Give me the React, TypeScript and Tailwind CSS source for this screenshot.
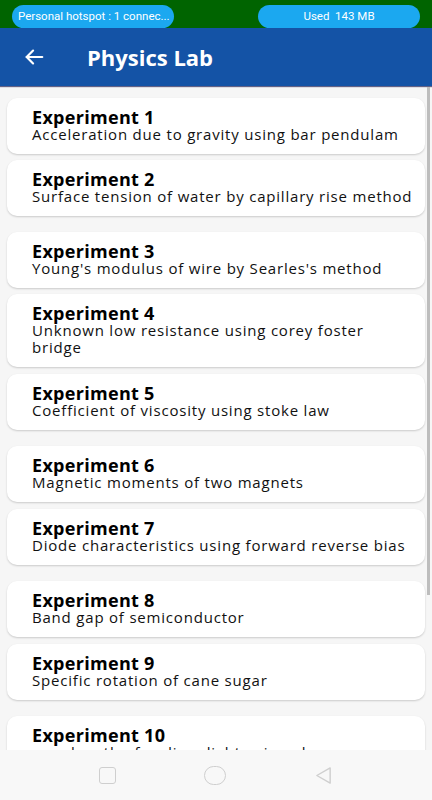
import React from 'react';

type Experiment = {
  title: string;
  desc: string;
  gapBefore: string;
  minH?: string;
};

const experiments: Experiment[] = [
  { title: 'Experiment 1', desc: 'Acceleration due to gravity using bar pendulam', gapBefore: 'mt-3' },
  { title: 'Experiment 2', desc: 'Surface tension of water by capillary rise method', gapBefore: 'mt-[6px]' },
  { title: 'Experiment 3', desc: "Young's modulus of wire by Searles's method", gapBefore: 'mt-4' },
  { title: 'Experiment 4', desc: 'Unknown low resistance using corey foster\nbridge', gapBefore: 'mt-[6px]', minH: 'min-h-[73px]' },
  { title: 'Experiment 5', desc: 'Coefficient of viscosity using stoke law', gapBefore: 'mt-[7px]' },
  { title: 'Experiment 6', desc: 'Magnetic moments of two magnets', gapBefore: 'mt-4' },
  { title: 'Experiment 7', desc: 'Diode characteristics using forward reverse bias', gapBefore: 'mt-[7px]' },
  { title: 'Experiment 8', desc: 'Band gap of semiconductor', gapBefore: 'mt-4' },
  { title: 'Experiment 9', desc: 'Specific rotation of cane sugar', gapBefore: 'mt-[7px]' },
  { title: 'Experiment 10', desc: 'wavelength of sodium light using plane', gapBefore: 'mt-4' }
];

function ExperimentCard({ item }: { item: Experiment }) {
  return (
    <div
      className={`${item.gapBefore} ${item.minH ?? 'min-h-[56px]'} mx-[7px] rounded-[10px] bg-white pl-[25px] pr-1 pt-[10px] pb-[6px] shadow-[0_1px_2px_rgba(0,0,0,0.18)]`}>
      <div className="text-[18px] leading-[18px] font-bold tracking-[0.3px] text-black">
        {item.title}
      </div>
      <div className="whitespace-pre-line text-[15px] leading-[17px] tracking-[0.8px] text-[#111]">
        {item.desc}
      </div>
    </div>);
}

export default function App() {
  return (
    <div
      className="relative flex h-[800px] w-[432px] flex-col overflow-hidden bg-[#f6f6f6]"
      style={{ fontFamily: '"Open Sans", Roboto, sans-serif' }}>

      <div className="flex h-[28px] items-end justify-between bg-[#006400] px-3">
        <div
          className="flex h-[23px] w-[162px] items-center whitespace-nowrap rounded-full bg-[#1ba8f0] pl-[6px] text-[11.5px] text-white"
          style={{ fontFamily: 'Roboto, sans-serif' }}>
          Personal hotspot : 1 connec...
        </div>
        <div
          className="flex h-[23px] w-[162px] items-center justify-center whitespace-nowrap rounded-full bg-[#1ba8f0] text-[11.5px] text-white"
          style={{ fontFamily: 'Roboto, sans-serif' }}>
          Used&nbsp; 143 MB
        </div>
      </div>

      <div className="flex h-[58px] items-center bg-[#1453a6] shadow-[0_1px_1px_rgba(0,0,60,0.6)]">
        <svg className="ml-[23px] h-[22px] w-[22px]" viewBox="0 0 24 24" fill="none" stroke="white" strokeWidth="2.4" strokeLinecap="round" strokeLinejoin="round">
          <path d="M21 12H4" />
          <path d="M11 5l-7 7 7 7" />
        </svg>
        <div className="ml-[42px] text-[22px] font-bold text-white">Physics Lab</div>
      </div>

      <div className="flex-1 overflow-hidden">
        {experiments.map((e) =>
        <ExperimentCard key={e.title} item={e} />
        )}
      </div>

      <div className="absolute right-[2px] top-[87px] h-[508px] w-[3px] bg-[#bdbdbd]" />

      <div className="flex h-[50px] items-center justify-center gap-[88px] bg-[#f8f8f8]">
        <div className="h-[17px] w-[17px] rounded-[3px] border-[1.5px] border-[#cfcfcf]" />
        <div className="h-[19px] w-[22px] rounded-full border-[1.5px] border-[#cfcfcf]" />
        <svg className="h-[19px] w-[19px]" viewBox="0 0 20 20" fill="none" stroke="#cfcfcf" strokeWidth="1.5" strokeLinejoin="round">
          <path d="M17 2 L3 10 L17 18 Z" />
        </svg>
      </div>
    </div>);
}
